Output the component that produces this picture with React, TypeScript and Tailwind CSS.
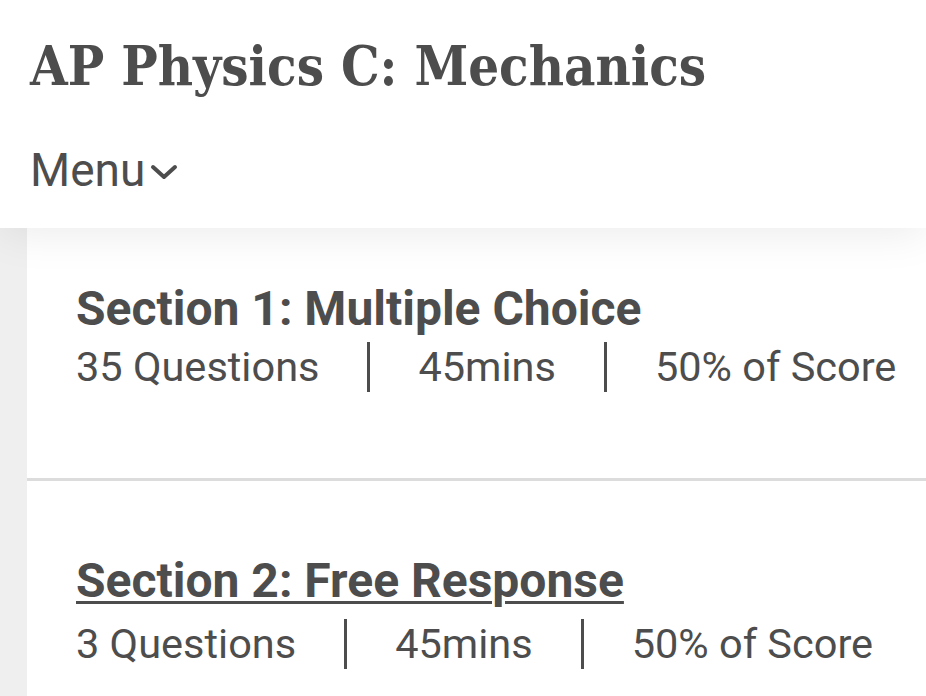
import React from 'react';

type Section = {
  title: string;
  questions: string;
  time: string;
  weight: string;
  link?: boolean;
};

const sections: Section[] = [
  { title: 'Section 1: Multiple Choice', questions: '35 Questions', time: '45mins', weight: '50% of Score' },
  { title: 'Section 2: Free Response', questions: '3 Questions', time: '45mins', weight: '50% of Score', link: true },
];

const Divider = () => <span className="mx-[48px] h-[50px] w-[3px] bg-[#4d4d4d]" />;

const SectionCard: React.FC<{ s: Section; first?: boolean }> = ({ s, first }) => (
  <div
    className={`bg-white pl-[49px] ${first ? 'h-[253px] pt-[53px] border-b-[3px] border-[#dcdcdc]' : 'h-[300px] pt-[72px]'}`}
  >
    <h2
      className={`text-[48px] font-bold leading-[56px] text-[#4d4d4d] ${s.link ? 'underline decoration-[3px] underline-offset-[4px]' : ''}`}
    >
      {s.title}
    </h2>
    <div
      className={`flex items-center text-[41.5px] leading-[50px] text-[#4d4d4d] ${first ? 'mt-[5px]' : 'mt-[10px]'}`}
    >
      <span>{s.questions}</span>
      <Divider />
      <span>{s.time}</span>
      <Divider />
      <span>{s.weight}</span>
    </div>
  </div>
);

export default function App() {
  return (
    <div className="h-[696px] w-[926px] overflow-hidden bg-[#efefef] font-['Roboto',sans-serif]">
      <header className="relative z-10 h-[228px] bg-white px-[30px] pt-[30px] shadow-[0_6px_40px_rgba(0,0,0,0.08)]">
        <h1 className="font-['DejaVu_Serif_Condensed','DejaVu_Serif',serif] text-[54px] font-bold leading-[72px] text-[#4d4d4d]">
          AP Physics C: Mechanics
        </h1>
        <button className="mt-[40px] flex items-center text-[46px] leading-[56px] text-[#4d4d4d]">
          Menu
          <svg className="ml-[4px] mt-[4px]" width="30" height="22" viewBox="0 0 30 22" fill="none">
            <path d="M4 6l11 10 11-10" stroke="#4d4d4d" strokeWidth="4" strokeLinecap="round" strokeLinejoin="round" />
          </svg>
        </button>
      </header>
      <main className="pl-[27px]">
        {sections.map((s, i) => (
          <SectionCard key={s.title} s={s} first={i === 0} />
        ))}
      </main>
    </div>
  );
}
